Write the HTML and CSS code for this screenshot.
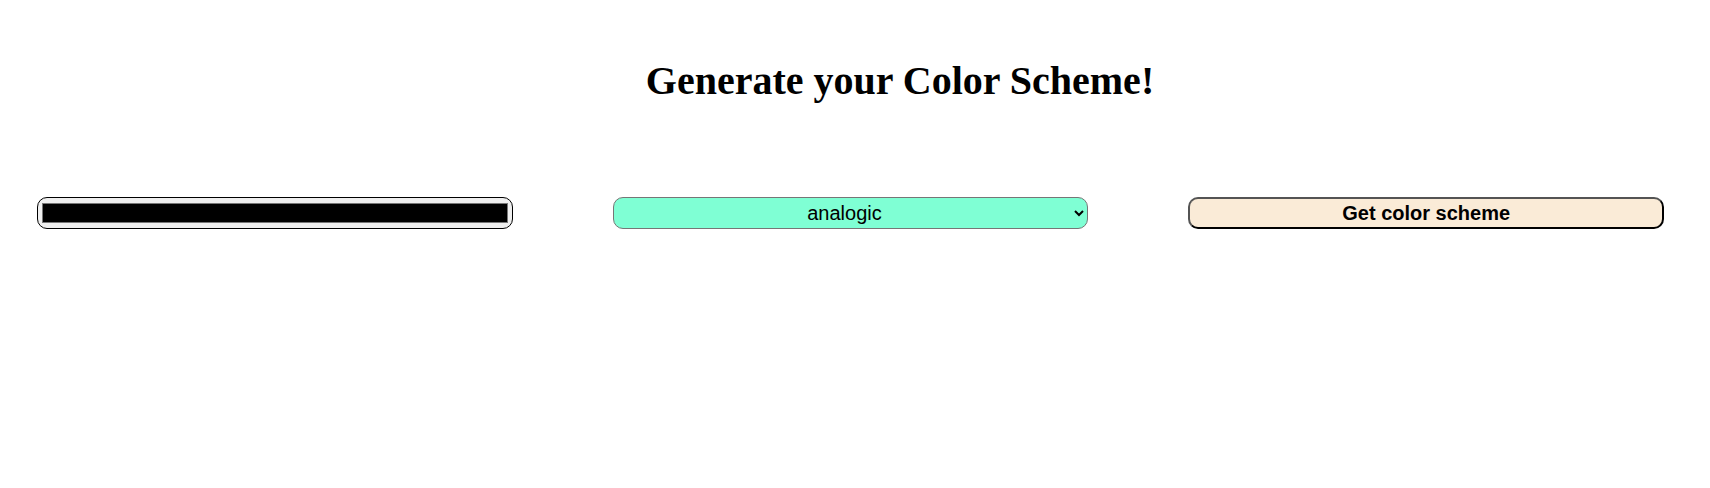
FILE: index.html
```html
<!DOCTYPE html>
<html>
<head>
<meta charset="utf-8">
<link rel="stylesheet" href="styles.css">
</head>
<body>
<h1 class="title">Generate your Color Scheme!</h1>
<form class="controls">
  <input class="color-input" type="color" value="#000000">
  <select class="mode-select">
    <option>analogic</option>
  </select>
  <button class="get-btn" type="button">Get color scheme</button>
</form>
</body>
</html>
```
FILE: styles.css
```css
body {
  margin: 0;
  background: #ffffff;
  font-family: "Liberation Serif", serif;
}
.title {
  margin: 0;
  padding: 57px 0 0 90px;
  text-align: center;
  font-size: 40px;
  font-weight: bold;
  line-height: 48px;
}
.controls {
  display: grid;
  grid-template-columns: 1fr 1fr 1fr;
  column-gap: 100px;
  padding: 0 46px 0 37px;
  margin-top: 92px;
}
.color-input {
  height: 32px;
  width: 100%;
  box-sizing: border-box;
  border: 1px solid #000;
  border-radius: 10px;
  background: #efefef;
  padding: 1px 2px;
  margin: 0;
}
.mode-select {
  height: 32px;
  width: 100%;
  box-sizing: border-box;
  border: 1px solid #767676;
  border-radius: 10px;
  background: #7fffd4;
  font-family: "Liberation Sans", Arial, sans-serif;
  font-size: 20px;
  text-align: center;
  text-align-last: center;
  margin: 0;
  color: #000;
}
.get-btn {
  height: 32px;
  width: 100%;
  box-sizing: border-box;
  border: 2px outset #000;
  border-radius: 10px;
  background: #faebd7;
  font-family: "Liberation Sans", Arial, sans-serif;
  font-size: 20px;
  font-weight: bold;
  margin: 0;
  color: #000;
}
```
